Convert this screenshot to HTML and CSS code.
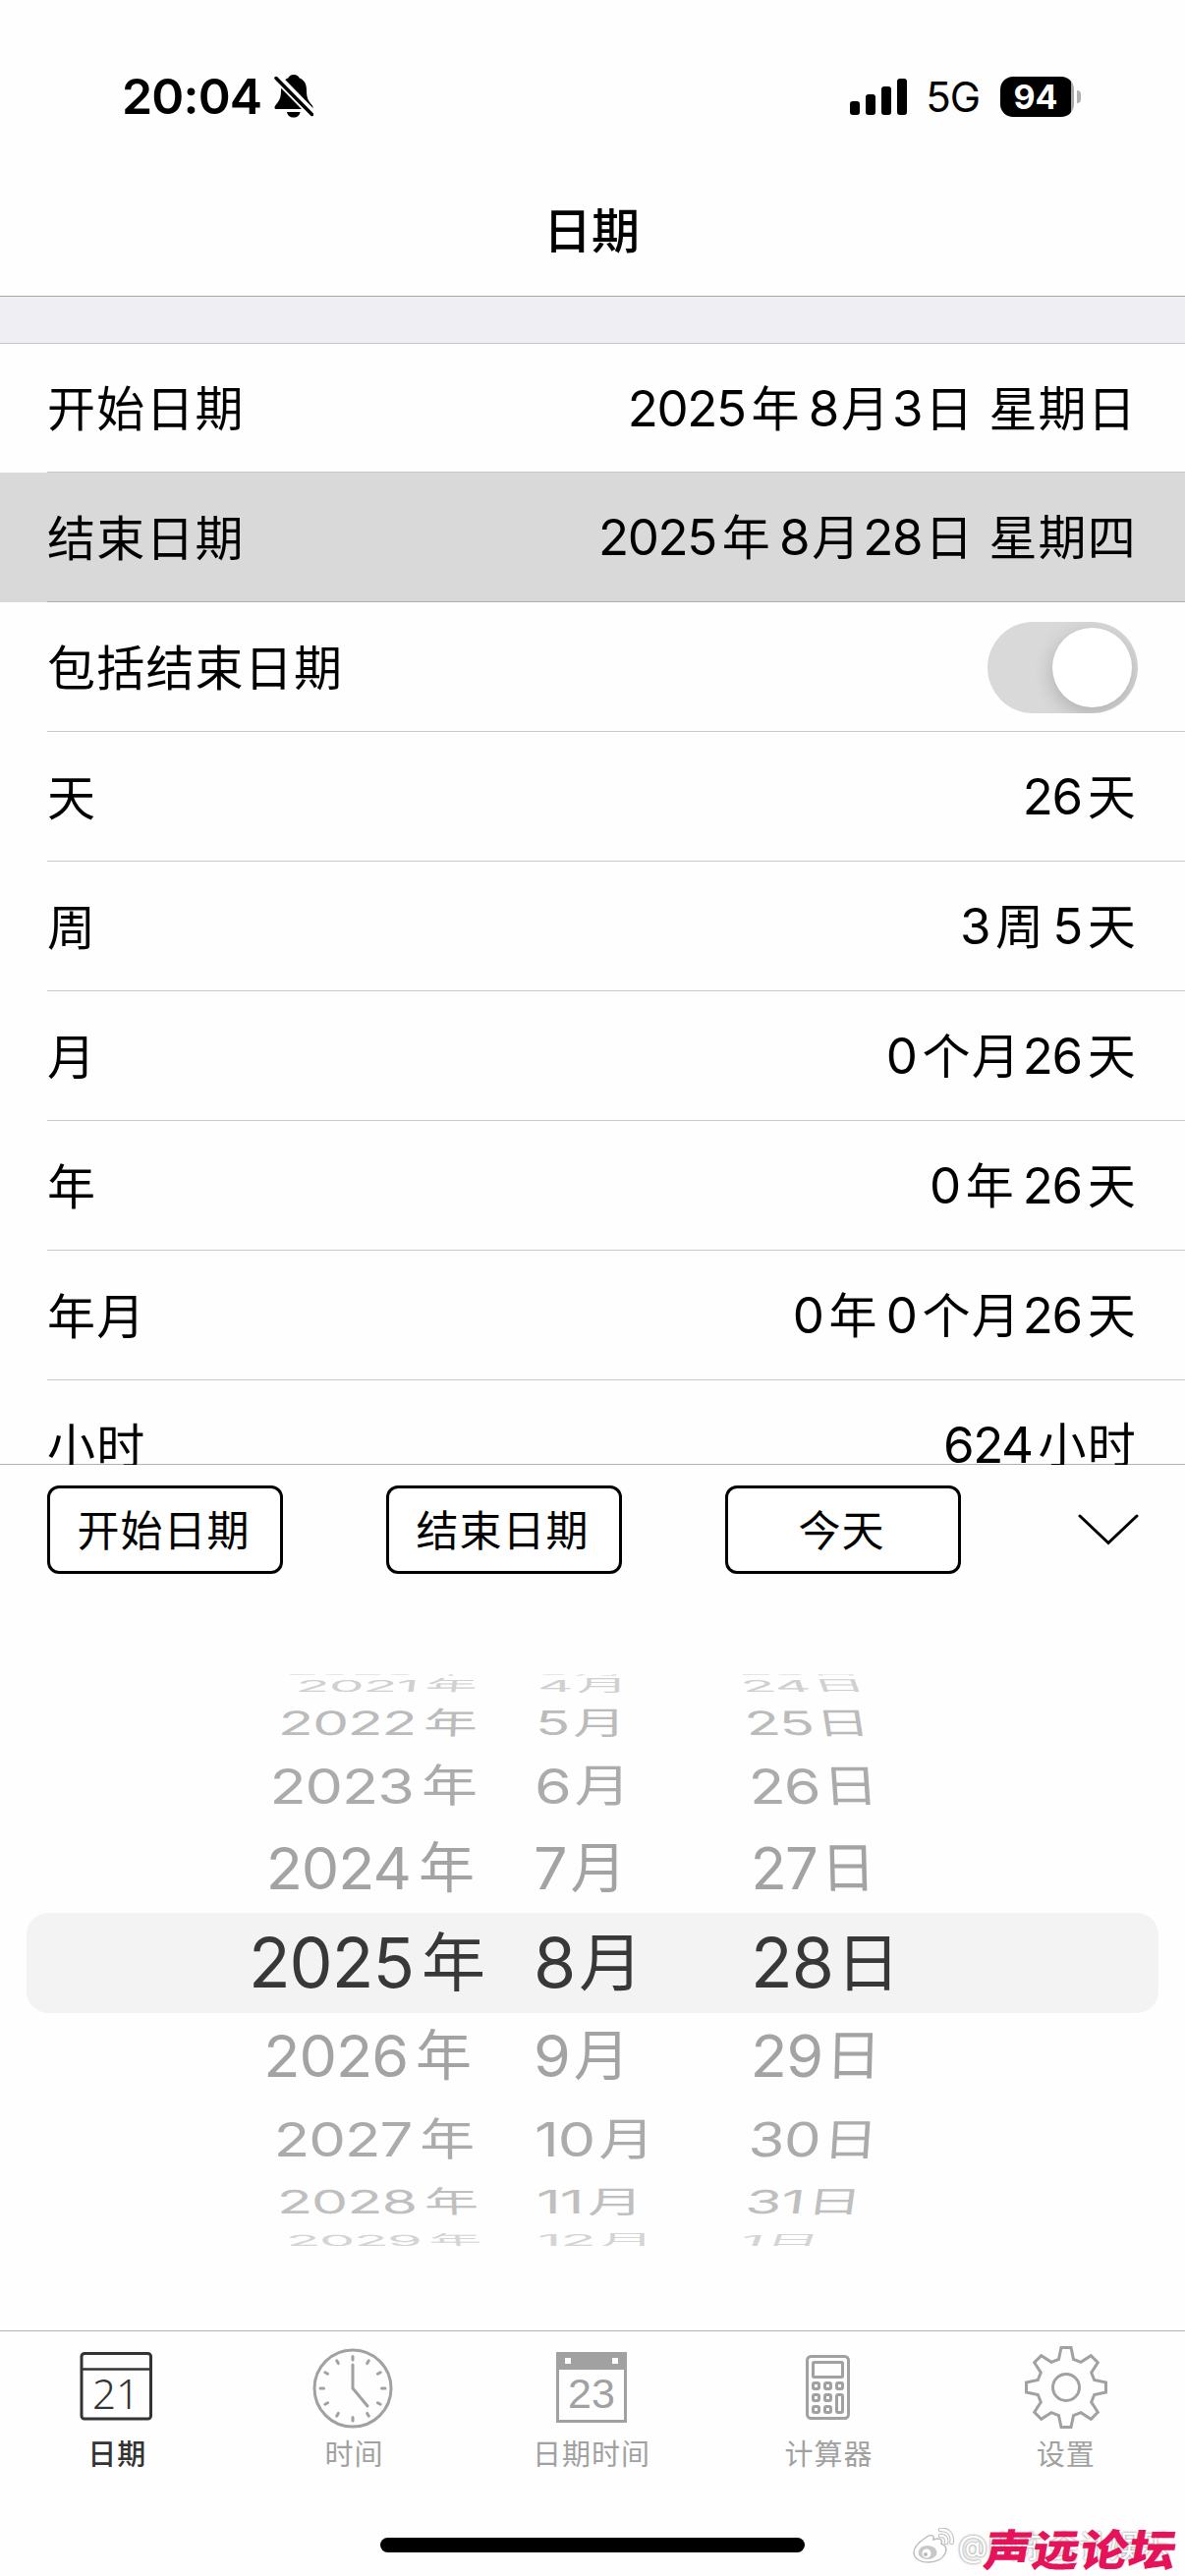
FILE: index.html
```html
<!DOCTYPE html>
<html lang="zh-CN">
  <head>
    <meta charset="UTF-8" />
    <meta name="viewport" content="width=device-width, initial-scale=1.0" />
    <title>日期</title>
    <link rel="stylesheet" href="styles.css">
  </head>
  <body>
    <div class="screen">
      <div class="status-bar">
        <div class="status-left">
          <span class="time">20:04</span>
          <svg class="bell" width="40" height="44" viewBox="0 0 40 44">
            <path d="M20 0c3 0 5 1.500 5.800 3.600C31 5.500 33 10 33 16c0 8 2 11 5.500 15 1.500 2 1.500 4-1 4H2.500C0 35 0 33 1.500 31 5 27 7 24 7 16 7 10 9 5.500 14.200 3.600 15 1.500 17 0 20 0z" />
            <path d="M13 38h13.500c-.5 3.500-3 5.500-6.700 5.500S13.500 41.500 13 38z" />
            <path d="M-1 -1L42 43" stroke="#fff" stroke-width="9" />
            <path d="M2 3.500L38.500 40.500" stroke="#000" stroke-width="3.500" stroke-linecap="round" />
          </svg>
        </div>
        <div class="status-right">
          <div class="signal">
            <i class="bar bar-1"></i>
            <i class="bar bar-2"></i>
            <i class="bar bar-3"></i>
            <i class="bar bar-4"></i>
          </div>
          <span class="network">5G</span>
          <div class="battery"><span>94</span></div>
          <i class="battery-tip"></i>
        </div>
      </div>

      <h1 class="title">日期</h1>
      <div class="section-gap"></div>

      <div class="list">
        <div class="row">
          <span class="label">开始日期</span>
          <span class="value"><b>2025</b>年<b class="wide tight">8</b>月<b class="tight">3</b>日 星期日</span>
        </div>
        <div class="row selected">
          <span class="label">结束日期</span>
          <span class="value"><b>2025</b>年<b class="wide tight">8</b>月<b class="tight">28</b>日 星期四</span>
        </div>
        <div class="row">
          <span class="label">包括结束日期</span>
          <span class="switch"><i class="knob"></i></span>
        </div>
        <div class="row">
          <span class="label">天</span>
          <span class="value"><b>26</b>天</span>
        </div>
        <div class="row">
          <span class="label">周</span>
          <span class="value"><b>3</b>周<b class="wide">5</b>天</span>
        </div>
        <div class="row">
          <span class="label">月</span>
          <span class="value"><b>0</b>个月<b>26</b>天</span>
        </div>
        <div class="row">
          <span class="label">年</span>
          <span class="value"><b>0</b>年<b class="wide">26</b>天</span>
        </div>
        <div class="row">
          <span class="label">年月</span>
          <span class="value"><b>0</b>年<b class="wide">0</b>个月<b>26</b>天</span>
        </div>
        <div class="row">
          <span class="label">小时</span>
          <span class="value"><b>624</b>小时</span>
        </div>
      </div>

      <div class="toolbar">
        <button class="btn">开始日期</button>
        <button class="btn">结束日期</button>
        <button class="btn">今天</button>
        <svg class="chevron" width="62" height="32" viewBox="0 0 62 32">
          <path d="M2 2L31 29.500L60 2" fill="none" stroke="#000" stroke-width="3" stroke-linecap="round" />
        </svg>
      </div>

      <div class="picker">
        <div class="wheel">
          <div class="item up-5"><span class="year"><b>2020</b>年</span><span class="month"><b>3</b>月</span><span class="day"><b>23</b>日</span></div>
          <div class="item up-4"><span class="year"><b>2021</b>年</span><span class="month"><b>4</b>月</span><span class="day"><b>24</b>日</span></div>
          <div class="item up-3"><span class="year"><b>2022</b>年</span><span class="month"><b>5</b>月</span><span class="day"><b>25</b>日</span></div>
          <div class="item up-2"><span class="year"><b>2023</b>年</span><span class="month"><b>6</b>月</span><span class="day"><b>26</b>日</span></div>
          <div class="item up-1"><span class="year"><b>2024</b>年</span><span class="month"><b>7</b>月</span><span class="day"><b>27</b>日</span></div>
          <div class="item current"><span class="year"><b>2025</b>年</span><span class="month"><b>8</b>月</span><span class="day"><b>28</b>日</span></div>
          <div class="item down-1"><span class="year"><b>2026</b>年</span><span class="month"><b>9</b>月</span><span class="day"><b>29</b>日</span></div>
          <div class="item down-2"><span class="year"><b>2027</b>年</span><span class="month"><b>10</b>月</span><span class="day"><b>30</b>日</span></div>
          <div class="item down-3"><span class="year"><b>2028</b>年</span><span class="month"><b>11</b>月</span><span class="day"><b>31</b>日</span></div>
          <div class="item down-4"><span class="year"><b>2029</b>年</span><span class="month"><b>12</b>月</span><span class="day"><b>1</b>日</span></div>
        </div>
      </div>

      <div class="tab-bar">
        <div class="tab active">
          <svg width="84" height="84" viewBox="0 0 84 84" fill="none" stroke="currentColor" stroke-width="3">
            <rect x="6" y="7.500" width="70.500" height="66.500" rx="3" />
            <path d="M6 23.500H76" stroke-width="2.500" />
            <text class="cal-light" x="41" y="63.500">21</text>
          </svg>
          <span>日期</span>
        </div>
        <div class="tab">
          <svg width="84" height="84" viewBox="0 0 84 84" fill="none" stroke="currentColor" stroke-width="3" stroke-linecap="round">
            <circle cx="40" cy="43" r="39" />
            <path d="M40 19V43L55 61" />
            <path d="M40 10.500V14M40 72.500V76M7 43H10.500M69.500 43H73M23.700 14.800L25.300 17.600M56.300 14.800L54.700 17.600M23.700 71.200L25.300 68.400M56.300 71.200L54.700 68.400M11.800 26.700L14.600 28.300M68.200 26.700L65.400 28.300M11.800 59.300L14.600 57.700M68.200 59.300L65.400 57.700" />
          </svg>
          <span>时间</span>
        </div>
        <div class="tab">
          <svg width="84" height="84" viewBox="0 0 84 84" fill="none">
            <path d="M6 6H78V78H6zM9 24V75H75V24zM15 12V18H21V12zM63 12V18H69V12z" fill="currentColor" fill-rule="evenodd" />
            <text class="cal-sans" x="42" y="63">23</text>
          </svg>
          <span>日期时间</span>
        </div>
        <div class="tab">
          <svg width="84" height="84" viewBox="0 0 84 84" fill="none" stroke="currentColor" stroke-width="3">
            <rect x="20.500" y="10.500" width="42" height="63" rx="4" />
            <rect x="26.500" y="16.500" width="30" height="15" rx="1" />
            <rect x="26.500" y="37.500" width="6" height="6" rx="1.500" />
            <rect x="38.500" y="37.500" width="6" height="6" rx="1.500" />
            <rect x="50.500" y="37.500" width="6" height="6" rx="1.500" />
            <rect x="26.500" y="49.500" width="6" height="6" rx="1.500" />
            <rect x="38.500" y="49.500" width="6" height="6" rx="1.500" />
            <rect x="50.500" y="49.500" width="6" height="18" rx="1.500" />
            <rect x="26.500" y="61.500" width="6" height="6" rx="1.500" />
            <rect x="38.500" y="61.500" width="6" height="6" rx="1.500" />
          </svg>
          <span>计算器</span>
        </div>
        <div class="tab">
          <svg width="84" height="84" viewBox="0 0 84 84" fill="none" stroke="currentColor" stroke-width="3">
            <path d="M37 1.500H47L49.500 13.300L57 16.300L67.300 9.700L74.300 16.700L67.700 27L70.700 34.500L82.500 37V47L70.700 49.500L67.700 57L74.300 67.300L67.300 74.300L57 67.700L49.500 70.700L47 82.500H37L34.500 70.700L27 67.700L16.700 74.300L9.700 67.300L16.300 57L13.300 49.500L1.500 47V37L13.300 34.500L16.300 27L9.700 16.700L16.700 9.700L27 16.300L34.500 13.300z" />
            <circle cx="42" cy="42" r="13.500" />
          </svg>
          <span>设置</span>
        </div>
      </div>

      <div class="home-indicator"></div>

      <div class="watermark">
        <svg width="44" height="38" viewBox="0 0 44 38">
          <path d="M14 10c5-4 9-3 8 2 5-2 10-1 8 4 5 2 6 6 4 10-3 6-9 9-17 9C8 35 2 31 2 25c0-5 6-11 12-15z" fill="#fff" stroke="#bdbdbd" stroke-width="1.500" />
          <ellipse cx="16" cy="25" rx="9.500" ry="7" fill="#c8c8c8" />
          <circle cx="15" cy="26" r="4.500" fill="#fff" />
          <circle cx="14" cy="27" r="2" fill="#bbb" />
          <path d="M29 2c8-1 13 5 11.500 13M29 8c4-.5 7 2.500 6 7" fill="none" stroke="#bdbdbd" stroke-width="4.500" stroke-linecap="round" />
          <path d="M29 2c8-1 13 5 11.500 13M29 8c4-.5 7 2.500 6 7" fill="none" stroke="#fff" stroke-width="2.500" stroke-linecap="round" />
        </svg>
        <span class="handle">@山东会计娱乐</span>
        <span class="forum">声远论坛</span>
      </div>
    </div>
  </body>
</html>
```
FILE: styles.css
```css
* {
  box-sizing: border-box;
}
body {
  margin: 0;
  background-color: #fefefe;
  color: #000;
  font-family: Inter, "Noto Sans CJK SC", sans-serif;
}
b,
i {
  font-weight: inherit;
  font-style: normal;
}
.screen {
  position: relative;
  width: 1206px;
  height: 2622px;
  overflow: hidden;
  display: flex;
  flex-direction: column;
}

/* status bar */
.status-bar {
  height: 176px;
  padding: 20px 106px 0 124px;
  display: flex;
  justify-content: space-between;
  align-items: center;
}
.status-left,
.status-right {
  display: flex;
  align-items: center;
}
.time {
  font-size: 50px;
  font-weight: 600;
  line-height: 60px;
  letter-spacing: -0.8px;
}
.bell {
  margin-left: 13px;
}
.signal {
  display: flex;
  align-items: flex-end;
  gap: 6px;
  height: 38px;
}
.bar {
  width: 10px;
  border-radius: 3px;
  background-color: #000;
}
.bar-1 {
  height: 14px;
}
.bar-2 {
  height: 21px;
}
.bar-3 {
  height: 29px;
}
.bar-4 {
  height: 37px;
}
.network {
  margin-left: 19px;
  padding-top: 2px;
  font-size: 42px;
  line-height: 50px;
  letter-spacing: -1px;
}
.battery {
  margin-left: 21px;
  width: 75px;
  height: 41px;
  padding-right: 3px;
  border-radius: 13px;
  background: linear-gradient(90deg, #000 72px, #a8a8a8 72px);
  color: #fff;
  font-size: 34px;
  font-weight: 700;
  line-height: 41px;
  text-align: center;
}
.battery-tip {
  margin-left: 3px;
  width: 4px;
  height: 13px;
  border-radius: 0 4px 4px 0;
  background-color: #b0b0b0;
}

/* header */
.title {
  margin: 0;
  height: 126px;
  padding-right: 2px;
  border-bottom: 1px solid #a7a7ac;
  font-size: 49px;
  font-weight: 500;
  line-height: 120px;
  text-align: center;
}
.section-gap {
  height: 48px;
  background-color: #efeef3;
  border-bottom: 1px solid #c8c7cc;
}

/* list */
.list {
  height: 1141px;
  overflow: hidden;
  background: linear-gradient(#b2b2b2, #b2b2b2) bottom / 100% 1px no-repeat;
}
.row {
  height: 132px;
  padding: 0 49px 0 48px;
  display: flex;
  justify-content: space-between;
  align-items: center;
  background: linear-gradient(#c8c7cc, #c8c7cc) 48px 131px / 1158px 1px no-repeat;
  font-size: 49px;
  letter-spacing: 1.2px;
  line-height: 72px;
}
.row:first-child {
  height: 131px;
  background-position: 48px 130px;
}
.row:last-child {
  background: none;
}
.row.selected {
  background-color: #d9d9d9;
  background-image: linear-gradient(#acabb0, #acabb0);
}
.label {
  padding: 3px 0 0;
}
.value {
  padding-top: 1px;
}
.value b {
  margin: 0 6px 0 2px;
  font-size: 51px;
  letter-spacing: -1.4px;
}
.value b.wide {
  margin-left: 8px;
}
.value b.tight {
  margin-right: 3px;
}
.switch {
  width: 153px;
  height: 93px;
  margin-right: -1px;
  padding: 6px;
  border-radius: 47px;
  background-color: #d9d9d9;
  display: flex;
  justify-content: flex-end;
  overflow: hidden;
}
.knob {
  width: 81px;
  height: 81px;
  border-radius: 50%;
  background-color: #fff;
  box-shadow: 0 6px 20px rgba(0, 0, 0, 0.2);
}

/* picker toolbar */
.toolbar {
  height: 132px;
  padding: 21px 47px 0 48px;
  display: flex;
  gap: 105px;
  align-items: flex-start;
}
.btn {
  width: 240px;
  height: 90px;
  padding: 2px 3px 0 0;
  border: 3px solid #000;
  border-radius: 12px;
  background-color: #fff;
  color: #000;
  font-family: inherit;
  font-size: 43px;
  letter-spacing: 1px;
  line-height: 80px;
}
.chevron {
  margin: 29px 0 0 auto;
}

/* wheel picker */
.picker {
  height: 749px;
  padding-top: 81px;
}
.wheel {
  height: 582px;
  overflow: hidden;
  display: flex;
  flex-direction: column;
}
.item {
  flex: none;
  display: grid;
  grid-template-columns: 543px 221px 1fr;
  align-items: center;
  font-size: 57px;
  line-height: 80px;
}
.item span {
  display: flex;
  align-items: center;
  height: 0;
}
.item b {
  margin-right: 8px;
  font-size: 61px;
  letter-spacing: -1px;
}
.year {
  justify-content: flex-end;
  padding-right: 57px;
}
.item .month b {
  margin-right: 4px;
}
.item .day b {
  margin-right: 3px;
}
.up-5 {
  height: 2px;
  margin-top: -3px;
  color: #e2e2e2;
}
.up-4 {
  height: 26px;
  color: #d0d0d0;
}
.up-3 {
  height: 50px;
  color: #bbb;
}
.up-2 {
  height: 78px;
  color: #ababab;
}
.up-1 {
  height: 90px;
  color: #a3a3a3;
}
.current {
  height: 102px;
  margin: 0 27px;
  border-radius: 22px;
  background-color: #f3f3f3;
  color: #383838;
  grid-template-columns: 516px 221px 1fr;
  font-size: 65px;
}
.current b {
  font-size: 70px;
}
.current .year {
  padding-right: 49px;
}
.down-1 {
  height: 88px;
  color: #a3a3a3;
}
.down-2 {
  height: 81px;
  color: #ababab;
}
.down-3 {
  height: 46px;
  color: #bfbfbf;
}
.down-4 {
  height: 31px;
  color: #d4d4d4;
}

/* rows flatten and lean as they roll away from the middle */
.year {
  transform-origin: 486px 0;
}
.month,
.day {
  transform-origin: 0 0;
}
.up-5 .year {
  transform: translateX(-4px) scale(0.9, 0.15);
}
.up-4 .year {
  transform: skewX(-8deg) scale(0.93, 0.27);
}
.up-3 .year {
  transform: skewX(-3deg) scale(0.96, 0.55);
}
.up-2 .year {
  transform: scaleY(0.8);
}
.up-1 .year {
  transform: translateX(-3px) scaleY(0.97);
}
.down-1 .year {
  transform: translateX(-6px) scaleY(0.97);
}
.down-2 .year {
  transform: translateX(-3px) scale(0.98, 0.79);
}
.down-3 .year {
  transform: translateX(1px) skewX(2deg) scale(0.97, 0.54);
}
.down-4 .year {
  transform: translateX(4px) skewX(8deg) scale(0.94, 0.25);
}
.up-5 .month {
  transform: translateX(3px) scale(0.93, 0.15);
}
.up-4 .month {
  transform: translateX(4px) scale(0.93, 0.27);
}
.up-3 .month {
  transform: translateX(2px) scale(0.95, 0.55);
}
.up-2 .month {
  transform: translateX(1px) scaleY(0.8);
}
.up-1 .month,
.down-1 .month {
  transform: scaleY(0.97);
}
.down-2 .month {
  transform: translateX(1px) scaleY(0.79);
}
.down-3 .month {
  transform: translateX(3px) scaleY(0.54);
}
.down-4 .month {
  transform: translateX(4px) scale(0.98, 0.25);
}
.up-5 .day {
  transform: translateX(-14px) skewX(24deg) scale(0.95, 0.15);
}
.up-4 .day {
  transform: translateX(-10px) skewX(20deg) scale(0.95, 0.27);
}
.up-3 .day {
  transform: translateX(-6px) skewX(9deg) scale(0.96, 0.55);
}
.up-2 .day {
  transform: translateX(-2px) skewX(4deg) scale(0.99, 0.8);
}
.up-1 .day {
  transform: skewX(1.5deg) scale(0.98, 0.97);
}
.down-1 .day {
  transform: skewX(-1.5deg) scaleY(0.97);
}
.down-2 .day {
  transform: translateX(-2px) skewX(-4deg) scale(0.98, 0.79);
}
.down-3 .day {
  transform: translateX(-5px) skewX(-8deg) scale(0.98, 0.54);
}
.down-4 .day {
  transform: translateX(-10px) skewX(-20deg) scale(0.96, 0.25);
}

/* tab bar */
.tab-bar {
  height: 211px;
  border-top: 1px solid #b2b2b2;
  display: flex;
}
.tab {
  flex: 1;
  padding: 15px 3px 0 0;
  display: flex;
  flex-direction: column;
  align-items: center;
  color: #a1a1a1;
  font-size: 29px;
  letter-spacing: 1px;
  line-height: 42px;
}
.tab svg {
  margin-bottom: 6px;
  overflow: visible;
}
.tab:last-child {
  padding-right: 2px;
}
.tab.active {
  color: #333;
  font-weight: 500;
}
.cal-light,
.cal-sans {
  fill: currentColor;
  stroke: none;
  text-anchor: middle;
  letter-spacing: 0;
}
.cal-light {
  font-family: "Noto Sans", sans-serif;
  font-size: 42px;
  font-weight: 300;
}
.cal-sans {
  font-family: "Liberation Sans", sans-serif;
  font-size: 43px;
  font-weight: 400;
}
.home-indicator {
  width: 432px;
  height: 15px;
  margin: 0 auto;
  border-radius: 8px;
  background-color: #000;
}

/* watermark laid over the bottom corner */
.watermark {
  position: absolute;
  left: 928px;
  top: 2573px;
  display: flex;
  align-items: center;
}
.handle {
  margin-left: 3px;
  color: #fff;
  font-size: 31px;
  line-height: 38px;
  text-shadow: 0 0 3px #999, 0 0 2px #aaa;
  white-space: nowrap;
}
.forum {
  position: absolute;
  left: 74px;
  top: -3px;
  color: #e5145a;
  font-size: 48px;
  font-weight: 900;
  letter-spacing: 1px;
  line-height: 52px;
  white-space: nowrap;
  transform: skewX(-10deg) scaleY(0.92);
}
```
